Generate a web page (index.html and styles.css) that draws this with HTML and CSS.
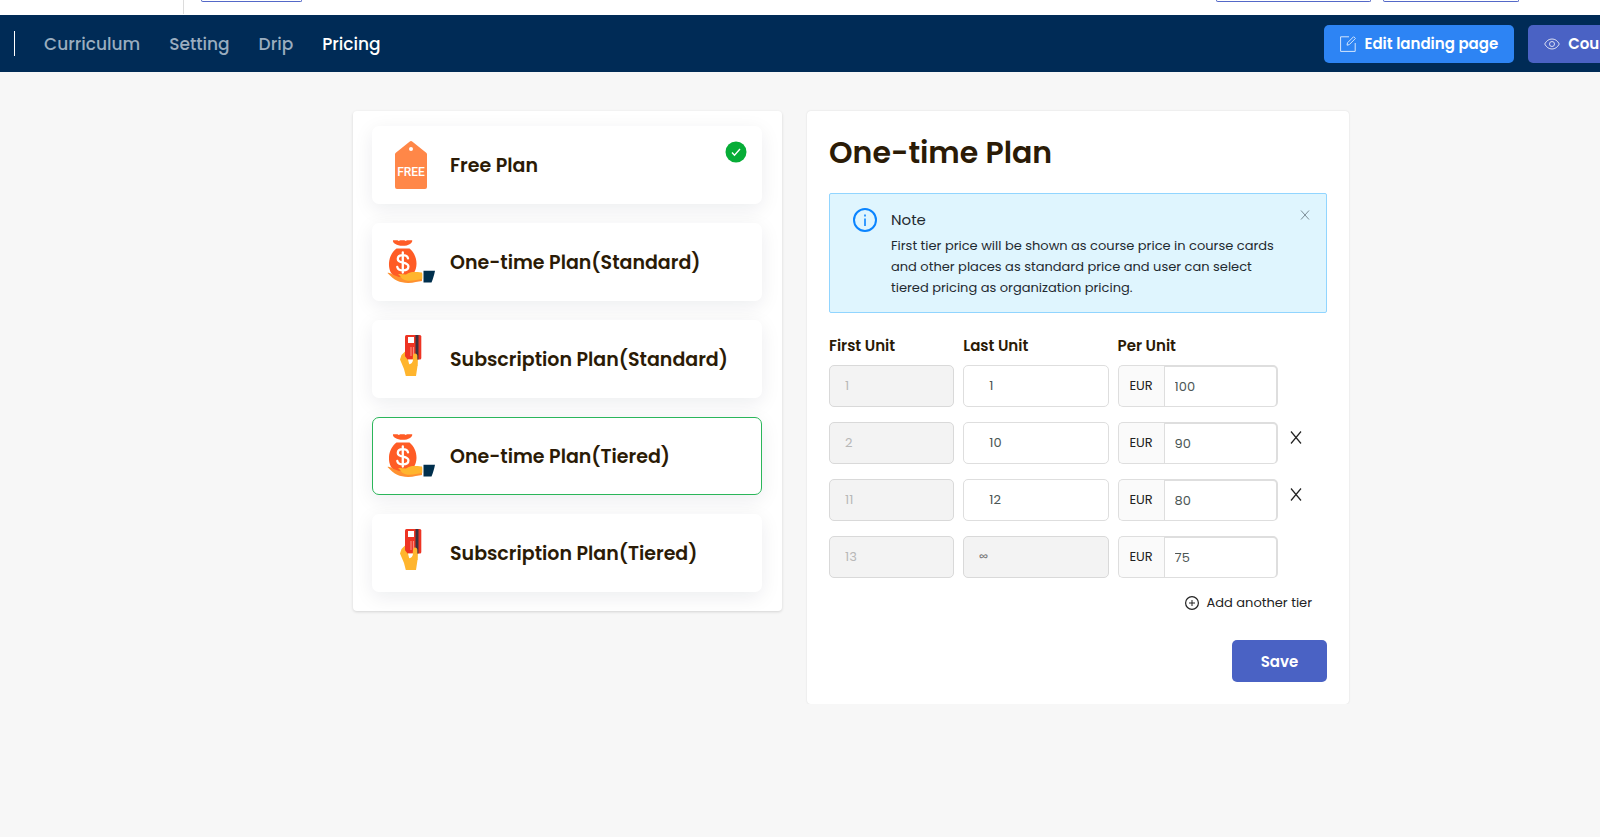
FILE: index.html
```html
<!DOCTYPE html>
<html lang="en">
<head>
    <meta charset="UTF-8">
    <meta name="viewport" content="width=device-width, initial-scale=1.0">
    <title>Course Pricing</title>
    <link rel="stylesheet" href="styles.css">
</head>
<body>
    <!-- shared plan icons -->
    <svg class="sprite" aria-hidden="true">
        <symbol id="icon-bag" viewBox="0 0 48 48">
            <path fill="#ff5c26" d="M6 2.2h4.500l1.300.8 1.400-.8h4.200l1.300.9 1.300-.9h5.200c.4 1.300-.8 2.800-2.200 3.800-2 1.400-4.300 1.800-7.500 1.800s-5.200-.6-7.100-1.800C6.500 5 5.600 3.500 6 2.200z"/>
            <path fill="#ff5c26" d="M9.500 10.500h13c4.300 3.500 7.200 9.400 7 15.500-.2 6.500-3.200 12-9 13.500h-9.500C4.500 38.500 1.600 32.500 2 25c.3-5.700 3.200-11.200 7.500-14.500z"/>
            <path fill="none" stroke="#fff" stroke-width="2.300" stroke-linecap="round" d="M15.800 14.500v20M21 20.300c-.5-2-2.500-3.100-5.200-3.100-3 0-5 1.300-5 3.700 0 5.300 10.600 2.300 10.600 7.600 0 2.500-2.200 3.900-5.400 3.900-3.200 0-5.200-1.300-5.700-3.500"/>
            <path fill="#ff9130" d="M.5 35c1.200-.8 3.200.4 5.500 1.700l6 2.300 23-4.500V43c-4 .4-8.500 2-14 1.900C12.500 44.800 7.500 42.500.5 35z"/>
            <path fill="#ffb52e" d="M11 36.300c2.300-.8 5 .2 8 .2 3.500-2.500 6-2.700 9-2.600 3.500.1 6.500.3 7.300 1.500v5.400c-5.500 1.500-12 2.700-17 1.400C13.500 41 14.500 38 11 36.300z"/>
            <path fill="#002f4d" d="M36.500 32.800H48c-.8 4.400-2 8-3.500 11.700h-8z"/>
        </symbol>
        <symbol id="icon-card" viewBox="0 0 48 48">
            <path fill="#ffb52e" d="M19 15.500 14.500 20 13 24.500l4 9.500 1.800 7H29l1.500-10 .5-11-3-2z"/>
            <rect x="18" y="0" width="16.300" height="24.500" rx="1.500" fill="#ee3423"/>
            <rect x="28.500" y="0" width="3" height="24.500" fill="#3b3440"/>
            <rect x="21" y="2" width="6" height="6" fill="#fff"/>
            <path stroke="#fa8a7e" stroke-width="1.200" d="M24 12v9M26.500 12v9"/>
            <path fill="#ffb52e" d="M16 18.500 20.500 24.500v4l5-1 .5-7c.3-2.800 4-2.600 4.300 0L30.500 31H18z"/>
            <path fill="#fff" d="M21 24.500h5c0 2.500-1.500 4.500-3.800 4.800z"/>
        </symbol>
    </svg>

    <div class="page">
        <div class="topbar">
            <div class="topbar-left">
                <button class="outline-btn small" type="button" aria-label="Menu"></button>
            </div>
            <button class="outline-btn large" type="button" aria-label="Help"></button>
            <button class="outline-btn" type="button" aria-label="Account"></button>
        </div>

        <header class="navbar">
            <nav class="nav-links">
                <a href="#">Curriculum</a>
                <a href="#">Setting</a>
                <a href="#">Drip</a>
                <a href="#" class="active">Pricing</a>
            </nav>
            <div class="nav-actions">
                <button class="btn btn-blue" type="button">
                    <svg width="16" height="16" viewBox="0 0 16 16" fill="none" stroke="currentColor"><path d="M9 .8H.6v14.600h14.600V7M7 9.200l.5-2.400L13.600.7l1.800 1.800-6.100 6.100z"/></svg>
                    Edit landing page
                </button>
                <button class="btn btn-indigo" type="button">
                    <svg width="16" height="16" viewBox="0 0 16 16" fill="none" stroke="currentColor"><path d="M.7 8C2.500 4.600 5 3 8 3s5.500 1.600 7.300 5C13.500 11.400 11 13 8 13S2.500 11.400.7 8z"/><circle cx="8" cy="8" r="2.500"/></svg>
                    Course page
                </button>
            </div>
        </header>

        <main class="content">
            <section class="card plans">
                <button class="plan" type="button">
                    <svg class="plan-icon" viewBox="0 0 48 48">
                        <path fill="#ff8748" d="M22.500.7Q24-.6 25.500.7L39.500 12q.5.500.5 1.500V46q0 2-2 2H10q-2 0-2-2V13.500q0-1 .5-1.500z"/>
                        <circle cx="24" cy="8" r="2" fill="#fff"/>
                        <text class="tag-text" x="24" y="35" text-anchor="middle">FREE</text>
                    </svg>
                    <span>Free Plan</span>
                    <svg class="check" viewBox="0 0 22 22"><circle cx="11" cy="11" r="10.500" fill="#07ad37"/><path d="M7 11.500l2.500 2.800L15 8" fill="none" stroke="#fff" stroke-width="1.400"/></svg>
                </button>
                <button class="plan" type="button">
                    <svg class="plan-icon"><use href="#icon-bag"/></svg>
                    <span>One-time Plan(Standard)</span>
                </button>
                <button class="plan" type="button">
                    <svg class="plan-icon"><use href="#icon-card"/></svg>
                    <span>Subscription Plan(Standard)</span>
                </button>
                <button class="plan selected" type="button">
                    <svg class="plan-icon"><use href="#icon-bag"/></svg>
                    <span>One-time Plan(Tiered)</span>
                </button>
                <button class="plan" type="button">
                    <svg class="plan-icon"><use href="#icon-card"/></svg>
                    <span>Subscription Plan(Tiered)</span>
                </button>
            </section>

            <section class="card detail">
                <h1>One-time Plan</h1>

                <div class="alert">
                    <svg class="alert-icon" viewBox="0 0 24 24" fill="none" stroke="#0a84ff"><circle cx="12" cy="12" r="11" stroke-width="2"/><path stroke-width="1.600" d="M12 10.500V18M12 6.500v2"/></svg>
                    <div class="alert-body">
                        <h2>Note</h2>
                        <p>First tier price will be shown as course price in course cards and other places as standard price and user can select tiered pricing as organization pricing.</p>
                    </div>
                    <button class="alert-close" type="button" aria-label="Close">
                        <svg width="10" height="10" viewBox="0 0 10 10" stroke="#7d8e97"><path d="M1 .5l8 9M9 .5l-8 9"/></svg>
                    </button>
                </div>

                <form>
                    <div class="tier tier-head">
                        <label for="first1">First Unit</label>
                        <label for="last1">Last Unit</label>
                        <label for="price1">Per Unit</label>
                    </div>
                    <div class="tier">
                        <input type="text" id="first1" value="1" disabled>
                        <input type="text" id="last1" class="last" value="1">
                        <div class="price"><span>EUR</span><input type="text" id="price1" value="100"></div>
                    </div>
                    <div class="tier">
                        <input type="text" value="2" aria-label="First unit" disabled>
                        <input type="text" class="last" value="10" aria-label="Last unit">
                        <div class="price"><span>EUR</span><input type="text" value="90" aria-label="Per unit"></div>
                        <button class="remove" type="button" aria-label="Remove tier"><svg width="12" height="13" viewBox="0 0 12 13" fill="none" stroke="#222" stroke-width="1.200"><path d="M1 .5l10 12M11 .5l-10 12"/></svg></button>
                    </div>
                    <div class="tier">
                        <input type="text" value="11" aria-label="First unit" disabled>
                        <input type="text" class="last" value="12" aria-label="Last unit">
                        <div class="price"><span>EUR</span><input type="text" value="80" aria-label="Per unit"></div>
                        <button class="remove" type="button" aria-label="Remove tier"><svg width="12" height="13" viewBox="0 0 12 13" fill="none" stroke="#222" stroke-width="1.200"><path d="M1 .5l10 12M11 .5l-10 12"/></svg></button>
                    </div>
                    <div class="tier">
                        <input type="text" value="13" aria-label="First unit" disabled>
                        <input type="text" class="infinite" value="∞" aria-label="Last unit" disabled>
                        <div class="price"><span>EUR</span><input type="text" value="75" aria-label="Per unit"></div>
                    </div>
                    <div class="form-actions">
                        <button class="add-tier" type="button">
                            <svg width="14" height="14" viewBox="0 0 14 14" fill="none" stroke="currentColor"><circle cx="7" cy="7" r="6.400" stroke-width="1.200"/><path d="M4 7h6M7 4v6"/></svg>
                            Add another tier
                        </button>
                        <button class="btn btn-indigo save" type="submit">Save</button>
                    </div>
                </form>
            </section>
        </main>
    </div>
</body>
</html>
```

FILE: styles.css
```css
* {
    box-sizing: border-box;
}
body {
    margin: 0;
    background-color: #f7f7f7;
    color: #2b1b06;
    font-family: Poppins, Inter, "Liberation Sans", sans-serif;
    overflow-x: hidden;
}
button, input {
    font-family: inherit;
}
button {
    cursor: pointer;
}
.sprite {
    display: none;
}
.page {
    width: calc(100% + 102px);
}

/* top bar */
.topbar {
    display: flex;
    align-items: flex-start;
    gap: 12px;
    height: 15px;
    padding-right: 183px;
    background-color: #fff;
}
.topbar-left {
    flex: 1;
    height: 14px;
    margin-left: 183px;
    padding-left: 17px;
    border-left: 1px solid #dcdcdc;
}
.outline-btn {
    display: block;
    width: 136px;
    height: 2px;
    padding: 0;
    background: #fff;
    border: 1px solid #5468c8;
    border-top: none;
    border-radius: 0 0 4px 4px;
}
.outline-btn.small {
    width: 101px;
}
.outline-btn.large {
    width: 155px;
}

/* navigation */
.navbar {
    display: flex;
    align-items: center;
    justify-content: space-between;
    height: 57px;
    padding: 0 20px 0 14px;
    background-color: #002b56;
}
.nav-links {
    display: flex;
    align-items: center;
    gap: 29px;
    height: 25px;
    padding-left: 29px;
    border-left: 1px solid #fff;
}
.nav-links a {
    color: #9aadbf;
    font-size: 17px;
    font-weight: 500;
    text-decoration: none;
}
.nav-links a.active {
    color: #fff;
}
.nav-actions {
    display: flex;
    gap: 14px;
}
.btn {
    display: flex;
    align-items: center;
    justify-content: center;
    gap: 8px;
    height: 38px;
    padding: 0 16px;
    border: none;
    border-radius: 5px;
    color: #fff;
    font-size: 15px;
    font-weight: 600;
    white-space: nowrap;
}
.btn svg {
    opacity: 0.8;
}
.btn-blue {
    background-color: #2d84f4;
}
.btn-indigo {
    background-color: #4a62c4;
}

/* content */
.content {
    display: grid;
    grid-template-columns: 429fr 542fr;
    align-items: start;
    gap: 25px;
    max-width: 996px;
    margin: 0 auto;
    padding-top: 39px;
}
.card {
    background-color: #fff;
    border-radius: 4px;
    box-shadow: 0 0 2px rgba(0, 0, 0, 0.12);
}
.plans {
    display: flex;
    flex-direction: column;
    gap: 19px;
    padding: 15px 20px 19px 19px;
    box-shadow: 0 1px 3px rgba(0, 0, 0, 0.14);
}
.plan {
    position: relative;
    display: flex;
    align-items: center;
    gap: 15px;
    height: 78px;
    padding: 0 14px;
    background-color: #fff;
    border: 1px solid transparent;
    border-radius: 7px;
    box-shadow: 0 5px 20px rgba(0, 20, 50, 0.08);
    color: #2b1b06;
    font-size: 19px;
    font-weight: 600;
    text-align: left;
}
.plan.selected {
    border-color: #2bb65a;
}
.plan-icon {
    flex: none;
    width: 48px;
    height: 48px;
}
.tag-text {
    fill: #fff;
    font-family: "Liberation Sans Narrow", Roboto, sans-serif;
    font-size: 12px;
    font-weight: 500;
}
.check {
    position: absolute;
    top: 14px;
    right: 14px;
    width: 22px;
    height: 22px;
}

/* plan detail */
.detail {
    padding: 22px;
}
.detail h1 {
    margin: 0 0 20px;
    font-size: 30px;
    font-weight: 600;
    line-height: 40px;
}
.alert {
    display: flex;
    align-items: flex-start;
    gap: 14px;
    padding: 14px 16px 14px 23px;
    background-color: #dff5fe;
    border: 1px solid #91d5ff;
    border-radius: 2px;
    color: #1f2a30;
}
.alert-icon {
    flex: none;
    width: 24px;
    height: 24px;
}
.alert-body {
    flex: 1;
}
.alert h2 {
    margin: 0 0 3px;
    font-size: 15px;
    font-weight: 400;
    line-height: 24px;
}
.alert p {
    margin: 0;
    font-size: 13px;
    line-height: 21px;
}
.alert-close {
    padding: 0;
    border: none;
    background: none;
    line-height: 16px;
}

/* tiers */
.tier {
    display: grid;
    grid-template-columns: 125fr 145fr 160fr 40fr;
    align-items: start;
    gap: 9px;
    margin-bottom: 15px;
}
.tier-head {
    margin: 21px 0 7px;
    font-size: 15px;
    font-weight: 600;
    line-height: 24px;
}
.tier input {
    width: 100%;
    min-width: 0;
    height: 42px;
    padding: 0 15px;
    border: 1px solid #dedede;
    border-radius: 5px;
    background-color: #fff;
    color: #4b5654;
    font-size: 13px;
}
.tier input.last {
    padding-left: 25px;
}
.tier input:disabled {
    background-color: #f3f3f3;
    border-color: #d9d9d9;
    color: #b8b8b8;
}
.tier input.infinite:disabled {
    color: #777;
}
.price {
    display: flex;
}
.price span {
    flex: none;
    width: 46px;
    border: 1px solid #dedede;
    border-right: none;
    border-radius: 5px 0 0 5px;
    background-color: #fafafa;
    color: #222;
    font-size: 13px;
    line-height: 40px;
    text-align: center;
}
.tier .price input {
    padding: 0 10px;
    border-width: 2px 2px 1px 1px;
    border-radius: 0 5px 5px 0;
}
.remove {
    justify-self: start;
    margin-top: 8px;
    padding: 0 3px;
    border: none;
    background: none;
}
.form-actions {
    display: flex;
    flex-direction: column;
    align-items: flex-end;
    gap: 27px;
}
.add-tier {
    display: flex;
    align-items: center;
    gap: 7px;
    padding: 0 15px 0 0;
    border: none;
    background: none;
    color: #222;
    font-size: 13px;
    line-height: 20px;
}
.save {
    width: 95px;
    height: 42px;
}
```
